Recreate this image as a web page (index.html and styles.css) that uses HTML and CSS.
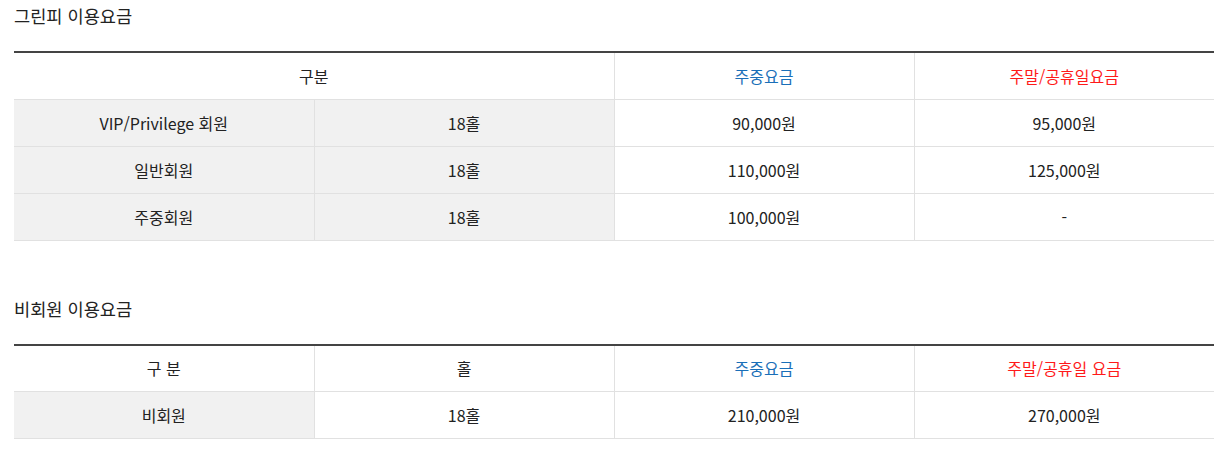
FILE: index.html
```html
<!DOCTYPE html>
<html lang="ko">
<head>
<meta charset="utf-8">
<link rel="stylesheet" href="styles.css">
</head>
<body>
<div class="page">
  <section class="fee">
    <h3 class="fee-title">그린피 이용요금</h3>
    <table class="fee-table">
      <colgroup><col><col><col><col></colgroup>
      <thead>
        <tr>
          <th colspan="2">구분</th>
          <th class="weekday">주중요금</th>
          <th class="weekend">주말/공휴일요금</th>
        </tr>
      </thead>
      <tbody>
        <tr><td class="gray">VIP/Privilege 회원</td><td class="gray">18홀</td><td>90,000원</td><td>95,000원</td></tr>
        <tr><td class="gray">일반회원</td><td class="gray">18홀</td><td>110,000원</td><td>125,000원</td></tr>
        <tr><td class="gray">주중회원</td><td class="gray">18홀</td><td>100,000원</td><td>-</td></tr>
      </tbody>
    </table>
  </section>
  <section class="fee second">
    <h3 class="fee-title">비회원 이용요금</h3>
    <table class="fee-table">
      <colgroup><col><col><col><col></colgroup>
      <thead>
        <tr>
          <th>구 분</th>
          <th>홀</th>
          <th class="weekday">주중요금</th>
          <th class="weekend">주말/공휴일 요금</th>
        </tr>
      </thead>
      <tbody>
        <tr><td class="gray">비회원</td><td>18홀</td><td>210,000원</td><td>270,000원</td></tr>
      </tbody>
    </table>
  </section>
</div>
</body>
</html>
```

FILE: styles.css
```css
* { box-sizing: border-box; }
html, body { margin: 0; padding: 0; background: #fff; }
body {
  font-family: "Noto Sans CJK KR", "Noto Sans", sans-serif;
  color: #222;
}
.page { padding: 4px 6px 0 14px; }
.fee-title {
  margin: 0;
  font-size: 17.6px;
  font-weight: 400;
  line-height: 24px;
  color: #222;
}
.fee-table {
  width: 1200px;
  margin-top: 23px;
  border-collapse: collapse;
  table-layout: fixed;
  border-top: 2px solid #444;
}
.fee-table col { width: 300px; }
.fee-table th,
.fee-table td {
  height: 47px;
  padding: 0;
  text-align: center;
  vertical-align: middle;
  font-size: 16px;
  font-weight: 400;
  border-bottom: 1px solid #e1e1e1;
  border-left: 1px solid #e1e1e1;
}
.fee-table th:first-child,
.fee-table td:first-child { border-left: none; }
.fee-table td.gray { background: #f1f1f1; }
.fee-table .weekday { color: #1a6fb8; }
.fee-table .weekend { color: #ff1a1a; }
.second { margin-top: 56px; }
```
